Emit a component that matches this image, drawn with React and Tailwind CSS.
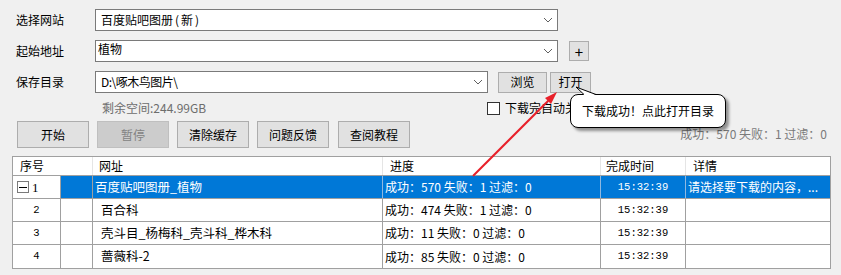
import React from 'react';

// 下载列表数据
const ROWS = [
  { id: 1, name: '百度贴吧图册_植物', progress: '成功：570 失败：1 过滤：0', time: '15:32:39', detail: '请选择要下载的内容，...', selected: true },
  { id: 2, name: '百合科', progress: '成功：474 失败：1 过滤：0', time: '15:32:39', detail: '' },
  { id: 3, name: '壳斗目_杨梅科_壳斗科_桦木科', progress: '成功：11 失败：0 过滤：0', time: '15:32:39', detail: '' },
  { id: 4, name: '蔷薇科-2', progress: '成功：85 失败：0 过滤：0', time: '15:32:39', detail: '' },
];

function Chevron() {
  return (
    <svg width="10" height="6" viewBox="0 0 10 6" className="shrink-0">
      <path d="M1 1 L5 5 L9 1" fill="none" stroke="#606060" strokeWidth="1" />
    </svg>
  );
}

function Combo({ width, children, textClass = '' }) {
  return (
    <div className={`flex h-[22px] items-center justify-between border border-[#7a7a7a] bg-white pl-[5px] pr-[4px] ${width}`}>
      <span className={`text-[12px] text-black ${textClass}`}>{children}</span>
      <Chevron />
    </div>
  );
}

function Btn({ width = 'w-[72px]', height = 'h-[27px]', disabled, children, textClass = 'text-[12px]' }) {
  return (
    <button
      type="button"
      className={`flex items-center justify-center border ${textClass} ${width} ${height} ${
        disabled ? 'border-[#bfbfbf] bg-[#cccccc] text-[#838383]' : 'border-[#adadad] bg-[#e1e1e1] text-black'
      }`}
    >
      {children}
    </button>
  );
}

export default function App() {
  return (
    <div className="relative h-[275px] w-[841px] overflow-hidden bg-[#f0f0f0] font-['Microsoft_YaHei','Noto_Sans_CJK_SC',sans-serif] text-[12px] leading-none text-black">
      <div className="flex flex-col pt-[9px]">
        <div className="flex h-[22px] items-center">
          <span className="w-[95px] pl-[16px]">选择网站</span>
          <Combo width="w-[463px]">
            百度贴吧图册<span className="ml-[2px] tracking-[2px]">(新)</span>
          </Combo>
        </div>

        <div className="mt-[9px] flex h-[22px] items-center">
          <span className="w-[95px] pl-[16px]">起始地址</span>
          <div className="flex h-[22px] w-[463px] items-start justify-between border border-[#7a7a7a] bg-white pl-[2px] pr-[4px]">
            <span className="mt-[2px]">植物</span>
            <div className="self-center"><Chevron /></div>
          </div>
          <div className="ml-[11px]">
            <Btn width="w-[20px]" height="h-[20px]" textClass="text-[15px]">+</Btn>
          </div>
        </div>

        <div className="mt-[9px] flex h-[22px] items-center">
          <span className="w-[95px] pl-[16px]">保存目录</span>
          <Combo width="w-[393px]" textClass="tracking-[-0.5px]">D:\啄木鸟图片\</Combo>
          <div className="ml-[10px]">
            <Btn width="w-[49px]" height="h-[21px]">浏览</Btn>
          </div>
          <div className="ml-[3px]">
            <Btn width="w-[41px]" height="h-[21px]">打开</Btn>
          </div>
        </div>

        <div className="mt-[7px] flex h-[16px] items-center">
          <span className="w-[487px] pl-[102px] text-[#6d6d6d]">剩余空间:244.99GB</span>
          <span className="h-[13px] w-[13px] border border-[#333333] bg-white" />
          <span className="ml-[5px]">下载完自动关闭</span>
        </div>

        <div className="mt-[5px] flex h-[27px] items-start pl-[17px]">
          <div className="flex gap-[8px]">
            <Btn>开始</Btn>
            <Btn disabled>暂停</Btn>
            <Btn>清除缓存</Btn>
            <Btn>问题反馈</Btn>
            <div className="ml-[1px]"><Btn>查阅教程</Btn></div>
          </div>
          <span className="ml-auto mr-[14px] mt-[7px] text-[#7a7a7a]">成功：570 失败：1 过滤：0</span>
        </div>

        <div className="ml-[12px] mt-[8px] w-[819px] border border-[#a0a0a0] bg-white">
          <div className="flex h-[19px] items-center border-b border-[#a0a0a0]">
            <div className="h-full w-[80px] border-r border-[#e5e5e5] pl-[7px] pt-[3px]">序号</div>
            <div className="h-full w-[290px] border-r border-[#e5e5e5] pl-[6px] pt-[3px]">网址</div>
            <div className="h-full w-[218px] border-r border-[#e5e5e5] pl-[7px] pt-[3px]">进度</div>
            <div className="h-full w-[85px] border-r border-[#e5e5e5] pl-[5px] pt-[3px]">完成时间</div>
            <div className="h-full flex-1 pl-[7px] pt-[3px]">详情</div>
          </div>
          {ROWS.map((row, i) => {
            const sel = row.selected;
            const cell = sel ? 'bg-[#0078d7] text-white border-[#8fb8e0]' : 'border-[#a0a0a0]';
            return (
              <div key={row.id} className={`flex h-[23px] ${i < ROWS.length - 1 ? 'border-b border-[#a0a0a0]' : ''}`}>
                <div className="flex w-[48px] items-center border-r border-[#a0a0a0]">
                  {sel ? (
                    <div className="flex items-center pl-[4px]">
                      <span className="flex h-[12px] w-[12px] items-center justify-center border border-[#7a7a7a]">
                        <span className="h-px w-[8px] bg-black" />
                      </span>
                      <span className="ml-[3px] font-['Liberation_Serif',serif] text-[13px]">{row.id}</span>
                    </div>
                  ) : (
                    <span className="w-full text-center font-['Liberation_Mono',monospace] text-[10.5px]">{row.id}</span>
                  )}
                </div>
                <div className={`w-[32px] border-r ${sel ? 'bg-[#0078d7] border-[#a0a0a0]' : 'border-[#a0a0a0]'}`} />
                <div className={`flex w-[290px] items-center border-r text-[12.5px] ${sel ? 'pl-[2px]' : 'pl-[8px]'} ${cell}`}>
                  {row.name}
                </div>
                <div className={`flex w-[218px] items-center border-r pl-[2px] ${cell}`}>{row.progress}</div>
                <div className={`flex w-[85px] items-center justify-center border-r font-['Liberation_Mono',monospace] text-[10.5px] ${cell}`}>
                  {row.time}
                </div>
                <div className={`flex flex-1 items-center pl-[2px] ${sel ? 'bg-[#0078d7] text-white' : ''}`}>{row.detail}</div>
              </div>
            );
          })}
        </div>
      </div>

      {/* 提示气泡 */}
      <div className="absolute left-[570px] top-[94px] flex h-[34px] w-[156px] items-center justify-center rounded-[8px] border border-black bg-white shadow-[3px_3px_3px_rgba(0,0,0,0.4)]">
        下载成功！点此打开目录
      </div>

      {/* 红色箭头 与 气泡尾巴 */}
      <svg className="pointer-events-none absolute inset-0" width="841" height="275">
        <polygon points="576,87 584,95 596,95" fill="white" stroke="none" />
        <polyline points="584,94.5 576,87 596,94.5" fill="none" stroke="black" strokeWidth="1" />
        <line x1="473" y1="176" x2="553" y2="96" stroke="#e8202a" strokeWidth="2" />
        <polygon points="557,92 545,98 551,104" fill="#e8202a" />
      </svg>
    </div>
  );
}
